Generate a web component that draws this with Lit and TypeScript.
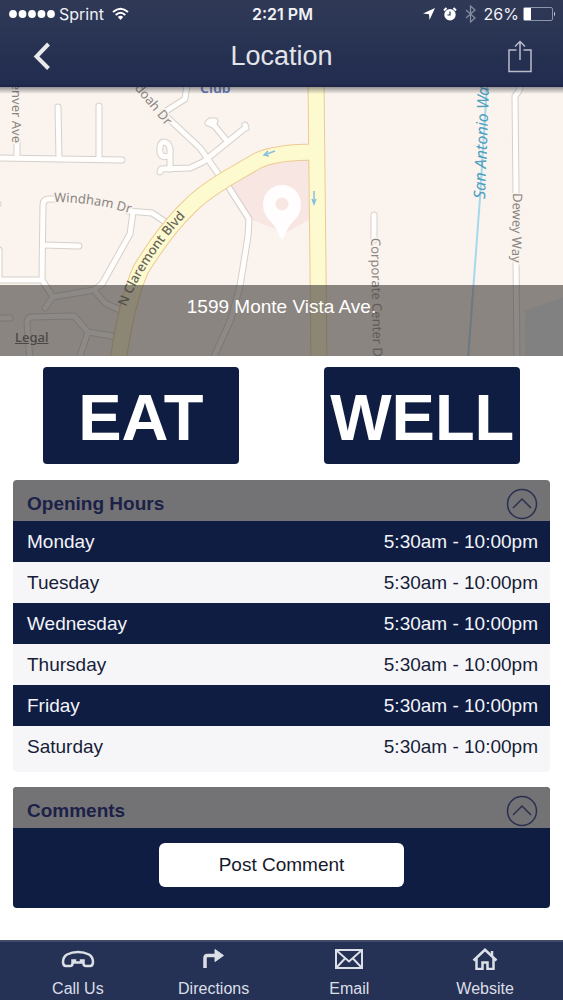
import { LitElement, html, svg, css } from "lit";
import { customElement, state } from "lit/decorators.js";

const STREETS = [
  "M-5 71 L122 73",
  "M58 20 L59 72",
  "M99 19 V72",
  "M17 54 V71",
  "M56 112 H49 Q43 112 43 118 L42 192",
  "M-5 193 H42 L53 210 L45 221",
  "M43 158 L79 159",
  "M128 124 L152 126 L167 136",
  "M133 125 L130 147 L102 197 L94 203 L53 210",
  "M94 203 L105 216 L120 223",
  "M-5 231 H10",
  "M30 272 L27 236 Q27 230 32 230 L74 229 L88 245 L112 249",
  "M88 245 L79 272",
  "M-6 117 H-2",
  "M-1 163 V190",
  "M187 -2 L185 12 L163 26",
  "M168 31 L200 61 L224 95",
  "M160 85 L161 82 L190 81 L203 75 L245 41",
  "M170 82 V62 Q169 55 163 55 Q159 57 160 66 Q162 71 168 69",
  "M227 54 L213 37",
  "M213 38 L208 36 L210 34 L215 34 Z",
  "M246 41 L245 38",
  "M226 96 L249 132 L248 149 L240 199 L231 232 L213 272",
  "M374 128 V153",
  "M520 -2 L519 4 L515 9 L516 106",
  "M516 174 L517 272",
];

const BOULEVARDS = [
  "M316 -6 L319 275",
  "M316 65 Q275 65 257 74 L226 92 Q200 108 188 121 Q166 142 141 182 Q126 216 118 275",
];

@customElement("location-map")
export class LocationMap extends LitElement {
  static styles = css`
    :host { display: block; position: relative; background: #fbf4ee; overflow: hidden; }
    .canvas { display: block; width: 100%; height: 269px; }
    .edge, .lane { fill: none; stroke-linecap: round; stroke-linejoin: round; }
    .street.edge { stroke: #d5d0cb; stroke-width: 7px; }
    .street.lane { stroke: #fffefd; stroke-width: 5px; }
    .boulevard.edge { stroke: #ecca92; stroke-width: 17px; }
    .boulevard.lane { stroke: #fefad0; stroke-width: 15px; }
    .label { font-family: "Noto Sans", "Open Sans", sans-serif; font-size: 13px; fill: #8a8683; }
    .halo { paint-order: stroke; stroke: #fbf4ee; stroke-width: 3px; }
    .major { fill: #67645c; font-weight: 500; }
    .water { fill: #4f9fc0; font-size: 16px; font-style: italic; }
    .place { fill: #5f75b5; font-weight: 600; font-size: 14px; }
    .legal {
      position: absolute; left: 15px; bottom: 11px; color: #4b4745;
      font: 500 13px/16px "Noto Sans", sans-serif; text-decoration: underline;
    }
    .address {
      position: absolute; inset: auto 0 0 0; height: 71px; box-sizing: border-box;
      padding-top: 10px; background: rgba(70, 64, 62, 0.62); color: #fff;
      text-align: center; font-size: 19px; line-height: 24px;
    }
    .shade {
      position: absolute; inset: 0 0 auto 0; height: 7px;
      background: linear-gradient(rgba(50, 50, 60, 0.5), rgba(50, 50, 60, 0));
    }
  `;

  render() {
    return html`
      <svg class="canvas" viewBox="0 0 563 269" preserveAspectRatio="xMidYMid slice" role="img" aria-label="Map">
        <path fill="#f8e6e2" d="M230 99 L260 79 L309 72 V133 L285 146 L252 133 Z" />
        <path fill="#e1e9f2" d="M525 224 L563 210 V269 H525 Z" />
        ${STREETS.map((d) => svg`<path class="street edge" d=${d} />`)}
        ${STREETS.map((d) => svg`<path class="street lane" d=${d} />`)}
        ${BOULEVARDS.map((d) => svg`<path class="boulevard edge" d=${d} />`)}
        ${BOULEVARDS.map((d) => svg`<path class="boulevard lane" d=${d} />`)}
        <path d="M487 -2 L480 111 L468 272" fill="none" stroke="#a5d8ec" stroke-width="2" />
        <g fill="none" stroke="#86c0dd" stroke-width="1.5">
          <path d="M275 64 L264 68 M268 64 L264 68 L269 69" />
          <path d="M314 104 V116 M312 112 L314 117 L316 112" />
        </g>
        <path id="windham" d="M54 115 Q96 115 135 128" fill="none" />
        <path id="claremont" d="M126 220 Q149 163 200 115" fill="none" />
        <text class="label halo"><textPath href="#windham">Windham Dr</textPath></text>
        <text class="label major"><textPath href="#claremont">N Claremont Blvd</textPath></text>
        <text class="label halo" text-anchor="end" transform="translate(12 56) rotate(90)">Denver Ave</text>
        <text class="label halo" text-anchor="end" transform="translate(166 39) rotate(50)">Shenandoah Dr</text>
        <text class="label place" x="200" y="6">Club</text>
        <text class="label halo" transform="translate(371 151) rotate(89)">Corporate Center D</text>
        <text class="label halo" transform="translate(513 106) rotate(91)">Dewey Way</text>
        <text class="label water" transform="translate(485 112) rotate(-88)">San Antonio Wash</text>
        <path
          fill="#fffdfd" fill-rule="evenodd"
          d="M282 98 A19 19 0 0 1 301 117 C301 127 296 132 291 137 C287 142 285 149 282 153 C279 149 277 142 273 137 C268 132 263 127 263 117 A19 19 0 0 1 282 98 Z M282 110.5 A6.5 6.5 0 1 0 282 123.5 A6.5 6.5 0 1 0 282 110.5 Z"
        />
      </svg>
      <div class="shade"></div>
      <div class="address">1599 Monte Vista Ave.</div>
      <a class="legal" href="#legal">Legal</a>
    `;
  }
}

const HOURS = ["Monday", "Tuesday", "Wednesday", "Thursday", "Friday", "Saturday"].map((day) => ({
  day,
  time: "5:30am - 10:00pm",
}));

const TABS = [
  {
    label: "Call Us",
    icon: svg`<path d="M5 18 Q2 18 2 14 Q2 9 6 6.500 Q11 4 17 4 Q23 4 28 6.500 Q32 9 32 14 Q32 18 29 18 H25 Q22.500 18 22.500 15.500 V12.500 H20 V14.500 H14 V12.500 H11.500 V15.500 Q11.500 18 9 18 Z" />`,
  },
  {
    label: "Directions",
    icon: svg`<path d="M8 20 V10 Q8 7.500 10.500 7.500 H18" stroke-width="3.500" /><path d="M18 1.500 L26.500 7.500 L18 13.500 Z" fill="currentColor" stroke-width="1" />`,
  },
  {
    label: "Email",
    icon: svg`<path d="M4 2 H30 V20 H4 Z M4 2 L17 13.500 L30 2 M4 20 L13 10.500 M30 20 L21 10.500" stroke-width="2" />`,
  },
  {
    label: "Website",
    icon: svg`<path d="M5.500 12.500 L17 1.800 L28.500 12.500 M8.500 10 V21 H14.500 V14.500 H19.500 V21 H25.500 V10" /><path d="M24 3 V8" />`,
  },
];

@customElement("app-root")
export class AppRoot extends LitElement {
  static styles = css`
    :host {
      display: flex; flex-direction: column; min-height: 100vh; background: #fff;
      font-family: "Liberation Sans", Arial, sans-serif; font-size: 19px; color: #161d38;
    }
    svg { display: block; }
    button { font: inherit; border: 0; padding: 0; background: none; color: inherit; cursor: pointer; }
    .top { background: linear-gradient(#303a57, #212c4f 96%, #1b2346); color: #f1f2f5; }
    .status {
      display: grid; grid-template-columns: 1fr auto 1fr; align-items: center; height: 28px;
      padding: 0 7px 0 9px; font: 400 16px/28px Inter, Roboto, sans-serif;
    }
    .side { display: flex; align-items: center; gap: 4px; }
    .right { justify-content: flex-end; gap: 8px; }
    .battery { display: flex; align-items: center; gap: 4px; }
    .wifi { margin-left: 4px; }
    .clock { font-weight: 600; }
    .bar { display: grid; grid-template-columns: 1fr auto 1fr; align-items: center; height: 59px; padding: 0 30px; }
    .bar h1 { margin: 0; padding-bottom: 3px; font-size: 27px; line-height: 56px; font-weight: 400; color: #e3e4ea; }
    .bar button { height: 56px; padding-bottom: 3px; color: #e9e9ea; }
    .back { justify-self: start; }
    .share { justify-self: end; }
    main { flex: 1; }
    .tiles { display: grid; grid-template-columns: 1fr 1fr; justify-items: center; padding: 11px 0 16px; }
    .tile {
      width: 196px; height: 97px; border-radius: 4px; background: #101d42; color: #fff;
      font-size: 65px; line-height: 101px; font-weight: 700; text-align: center;
    }
    .card { margin: 0 13px 15px; border-radius: 4px; overflow: hidden; background: #f6f6f8; }
    .card.dark { background: #101d42; margin-bottom: 32px; }
    .head {
      display: flex; justify-content: space-between; align-items: center; height: 41px;
      padding: 0 12px 0 14px; background: #737375; color: #1b2148;
    }
    .head h2 { margin: 0; padding-top: 6px; font-size: 19px; line-height: 36px; }
    .head button { padding-top: 6px; }
    .hours { width: 100%; border-collapse: collapse; margin-bottom: 5px; }
    .hours th, .hours td { height: 41px; padding: 0; font-weight: 400; line-height: 41px; }
    .hours th { text-align: left; padding-left: 14px; }
    .hours td { text-align: right; padding-right: 12px; }
    .hours tr:nth-child(odd) { background: #101d42; color: #f2f4fa; }
    .body { display: flex; justify-content: center; padding: 15px 12px 21px; }
    .body .post { width: 245px; height: 44px; border-radius: 6px; background: #fff; color: #161a2c; }
    .tabs {
      position: sticky; bottom: 0; display: grid; grid-template-columns: repeat(4, 1fr);
      height: 60px; box-sizing: border-box; padding: 0 10px; background: #253256; border-top: 2px solid #414a68;
    }
    .tab {
      display: flex; flex-direction: column; align-items: center; gap: 9px; padding-top: 6px;
      color: #dcdfe6; text-decoration: none; font-size: 16px; line-height: 20px;
    }
  `;

  @state() private hoursOpen = true;
  @state() private commentsOpen = true;

  private head(title: string, open: boolean, toggle: () => void) {
    return html`
      <div class="head">
        <h2>${title}</h2>
        <button aria-label="Toggle ${title}" aria-expanded=${open} @click=${toggle}>
          <svg width="32" height="32" viewBox="0 0 32 32" fill="none" stroke="#2b3050" stroke-width="1.5">
            <circle cx="16" cy="16" r="14.5" />
            <path d=${open ? "M7 20 L16 11 L25 20" : "M7 12 L16 21 L25 12"} />
          </svg>
        </button>
      </div>
    `;
  }

  render() {
    return html`
      <header class="top">
        <div class="status">
          <div class="side">
            <svg width="46" height="10" viewBox="0 0 46 10" fill="#fff">
              ${[4, 13.5, 23, 32.5, 42].map((x) => svg`<circle cx=${x} cy="5" r="3.9" />`)}
            </svg>
            <span>Sprint</span>
            <svg class="wifi" width="17" height="14" viewBox="0 0 17 14" fill="none" stroke="#fff" stroke-width="2">
              <path d="M1 5 Q8.5 -1.5 16 5 M3.7 8 Q8.5 3.5 13.3 8" />
              <path d="M5.8 10 Q8.5 7.5 11.2 10 L8.5 13 Z" fill="#fff" stroke="none" />
            </svg>
          </div>
          <span class="clock">2:21 PM</span>
          <div class="side right">
            <svg width="12" height="12" viewBox="0 0 12 12" fill="#fff"><path d="M12 0 L6.5 12 L6 6.2 L0 5.5 Z" /></svg>
            <svg width="14" height="14" viewBox="0 0 14 14">
              <circle cx="7" cy="7.8" r="5.7" fill="#fff" />
              <path d="M1 3.5 L3.5 1 M10.5 1 L13 3.5" stroke="#fff" stroke-width="2" />
              <path d="M7 4.5 V8 H4.5" fill="none" stroke="#2c3755" stroke-width="1.2" />
            </svg>
            <svg width="11" height="18" viewBox="0 0 11 18" fill="none" stroke="#858ca0" stroke-width="1.3">
              <path d="M1 5 L10 13 L5.5 17 V1 L10 5 L1 13" />
            </svg>
            <div class="battery">
              <span>26%</span>
              <svg width="33" height="14" viewBox="0 0 33 14">
                <rect x="0.5" y="0.5" width="29" height="13" rx="1.5" fill="none" stroke="#8e95a8" />
                <rect x="1" y="1" width="7" height="12" fill="#fff" />
                <path d="M31 4.5 Q33 7 31 9.5 Z" fill="#d6d9e0" />
              </svg>
            </div>
          </div>
        </div>
        <div class="bar">
          <button class="back" aria-label="Back">
            <svg width="24" height="30" viewBox="0 0 24 30" fill="none" stroke="currentColor" stroke-width="4">
              <path d="M18.5 3 L6.5 15.5 L18.5 27.5" />
            </svg>
          </button>
          <h1>Location</h1>
          <button class="share" aria-label="Share">
            <svg width="26" height="34" viewBox="0 0 26 34" fill="none" stroke="#b9bdca" stroke-width="1.5">
              <path d="M9.5 11 H2 V32.5 H24 V11 H16.5 M13 21 V3 M8 7.5 L13 2.5 L18 7.5" />
            </svg>
          </button>
        </div>
      </header>
      <main>
        <location-map></location-map>
        <div class="tiles">
          <div class="tile">EAT</div>
          <div class="tile">WELL</div>
        </div>
        <section class="card">
          ${this.head("Opening Hours", this.hoursOpen, () => (this.hoursOpen = !this.hoursOpen))}
          ${this.hoursOpen
            ? html`<table class="hours">
                <tbody>
                  ${HOURS.map((h) => html`<tr><th scope="row">${h.day}</th><td>${h.time}</td></tr>`)}
                </tbody>
              </table>`
            : null}
        </section>
        <section class="card dark">
          ${this.head("Comments", this.commentsOpen, () => (this.commentsOpen = !this.commentsOpen))}
          ${this.commentsOpen ? html`<div class="body"><button class="post">Post Comment</button></div>` : null}
        </section>
      </main>
      <nav class="tabs">
        ${TABS.map(
          (t) => html`<a class="tab" href="#${t.label.toLowerCase().replace(" ", "-")}">
            <svg width="34" height="22" viewBox="0 0 34 22" fill="none" stroke="currentColor" stroke-width="2.5">${t.icon}</svg>
            <span>${t.label}</span>
          </a>`
        )}
      </nav>
    `;
  }
}
